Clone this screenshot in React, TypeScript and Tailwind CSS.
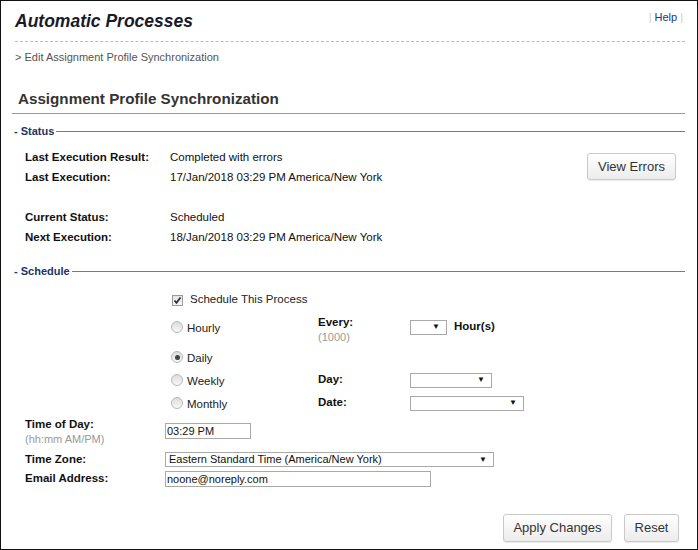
import React from 'react';

const Radio = ({ checked }: { checked?: boolean }) => (
    <span className="inline-flex w-[12px] h-[12px] rounded-full border border-[#b8b8b8] bg-gradient-to-b from-[#dcdcdc] to-[#f8f8f8] items-center justify-center shrink-0">
        {checked && <span className="w-[5px] h-[5px] rounded-full bg-[#444]" />}
    </span>
);

const Select = ({ width, text }: { width: string; text?: string }) => (
    <div className={`${width} h-[15px] border border-[#a9a9a9] bg-white flex items-center justify-between pl-[2px] pr-[6px] text-[11px] text-[#111] leading-none`}>
        <span>{text}</span>
        <span className="text-[8px]">▼</span>
    </div>
);

const Legend = ({ label }: { label: string }) => (
    <div className="flex items-center ml-[13px] mr-[12px] h-[14px]">
        <span className="text-[11px] font-bold text-[#1c3565] leading-[14px] pr-[2px]">- {label}</span>
        <div className="flex-1 border-t border-[#7a7a7a]" />
    </div>
);

const Label = ({ children }: { children: React.ReactNode }) => (
    <div className="w-[145px] shrink-0 font-bold text-[#111] leading-[20px]">{children}</div>
);

const GrayButton = ({ children, className }: { children: React.ReactNode; className: string }) => (
    <button className={`${className} rounded-[3px] border border-[#c9c9c9] bg-gradient-to-b from-white to-[#ececec] text-[13px] text-[#333] shadow-[0_1px_1px_rgba(0,0,0,0.08)]`}>
        {children}
    </button>
);

const App: React.FC = () => {
    return (
        <div className="w-[698px] h-[550px] border border-[#111] bg-white overflow-hidden font-['Liberation_Sans',Arial,sans-serif] text-[#111]">
            <div className="flex justify-between items-start pt-[8px] pl-[14px] pr-[14px]">
                <h1 className="text-[17.5px] leading-[24px] font-bold italic text-[#1a1a2a]">Automatic Processes</h1>
                <div className="text-[11px] leading-[14px] mt-[1px] flex gap-[3px]">
                    <span className="text-[#ccc]">|</span>
                    <span className="text-[#23357a]">Help</span>
                    <span className="text-[#ccc]">|</span>
                </div>
            </div>
            <div className="mt-[8px] ml-[14px] mr-[12px] border-t border-dashed border-[#bbb]" />
            <div className="mt-[8px] ml-[14px] text-[11px] leading-[14px] text-[#555]">&gt; Edit Assignment Profile Synchronization</div>
            <h2 className="mt-[25px] ml-[17px] text-[15.2px] leading-[20px] font-bold text-[#333]">Assignment Profile Synchronization</h2>
            <div className="mt-[4px] ml-[11px] mr-[12px] border-t border-[#999]" />

            <div className="mt-[10px]">
                <Legend label="Status" />
            </div>
            <div className="flex justify-between mt-[9px] pl-[24px] pr-[21px]">
                <div className="text-[11.5px] leading-[20px]">
                    <div className="flex"><Label>Last Execution Result:</Label><span>Completed with errors</span></div>
                    <div className="flex"><Label>Last Execution:</Label><span>17/Jan/2018 03:29 PM America/New York</span></div>
                    <div className="flex mt-[20px]"><Label>Current Status:</Label><span>Scheduled</span></div>
                    <div className="flex"><Label>Next Execution:</Label><span>18/Jan/2018 03:29 PM America/New York</span></div>
                </div>
                <GrayButton className="mt-[6px] w-[89px] h-[27px]">View Errors</GrayButton>
            </div>

            <div className="mt-[17px]">
                <Legend label="Schedule" />
            </div>

            <div className="pl-[170px] text-[11.5px] text-[#222]">
                <div className="flex items-center h-[20px] mt-[12px]">
                    <span className="w-[11px] h-[11px] ml-[1px] border border-[#9a9a9a] bg-gradient-to-b from-[#e4e4e4] to-[#f6f6f6] flex items-center justify-center">
                        <svg width="9" height="9" viewBox="0 0 9 9"><path d="M1.5 4.5 L3.5 6.8 L7.5 1.5" stroke="#333" strokeWidth="1.8" fill="none" /></svg>
                    </span>
                    <span className="ml-[7px]">Schedule This Process</span>
                </div>
                <div className="flex items-center h-[28px] mt-[3px]">
                    <div className="w-[147px] flex items-center">
                        <Radio />
                        <span className="ml-[4px] mt-[3px]">Hourly</span>
                    </div>
                    <div className="w-[92px] leading-[14px] mt-[4px]">
                        <div className="font-bold text-[#111]">Every:</div>
                        <div className="text-[11px] text-[#999] mt-[1px]">(1000)</div>
                    </div>
                    <Select width="w-[37px]" />
                    <span className="ml-[7px] font-bold text-[#111]">Hour(s)</span>
                </div>
                <div className="flex items-center h-[20px] mt-[6px]">
                    <Radio checked />
                    <span className="ml-[4px] mt-[3px]">Daily</span>
                </div>
                <div className="flex items-center h-[20px] mt-[3px]">
                    <div className="w-[147px] flex items-center">
                        <Radio />
                        <span className="ml-[4px] mt-[3px]">Weekly</span>
                    </div>
                    <div className="w-[92px] font-bold text-[#111]">Day:</div>
                    <Select width="w-[82px]" />
                </div>
                <div className="flex items-center h-[20px] mt-[3px]">
                    <div className="w-[147px] flex items-center">
                        <Radio />
                        <span className="ml-[4px] mt-[3px]">Monthly</span>
                    </div>
                    <div className="w-[92px] font-bold text-[#111]">Date:</div>
                    <Select width="w-[114px]" />
                </div>
            </div>

            <div className="pl-[24px] text-[11.5px]">
                <div className="flex items-start mt-[4px]">
                    <div className="w-[140px] leading-[14px]">
                        <div className="font-bold text-[#111]">Time of Day:</div>
                        <div className="text-[11px] text-[#999] mt-[1px]">(hh:mm AM/PM)</div>
                    </div>
                    <div className="mt-[6px] w-[86px] h-[16px] border border-[#a9a9a9] text-[11px] leading-[14px] pl-[1px]">03:29 PM</div>
                </div>
                <div className="flex items-center mt-[6px] h-[15px]">
                    <div className="w-[140px] font-bold text-[#111]">Time Zone:</div>
                    <Select width="w-[329px] pl-[3px]" text="Eastern Standard Time (America/New York)" />
                </div>
                <div className="flex items-center mt-[4px] h-[16px]">
                    <div className="w-[140px] font-bold text-[#111]">Email Address:</div>
                    <div className="w-[266px] h-[16px] border border-[#a9a9a9] text-[11px] leading-[14px] pl-[1px]">noone@noreply.com</div>
                </div>
            </div>

            <div className="flex justify-end gap-[12px] mt-[27px] pr-[18px]">
                <GrayButton className="w-[109px] h-[28px]">Apply Changes</GrayButton>
                <GrayButton className="w-[55px] h-[28px]">Reset</GrayButton>
            </div>
        </div>
    );
};

export default App;
